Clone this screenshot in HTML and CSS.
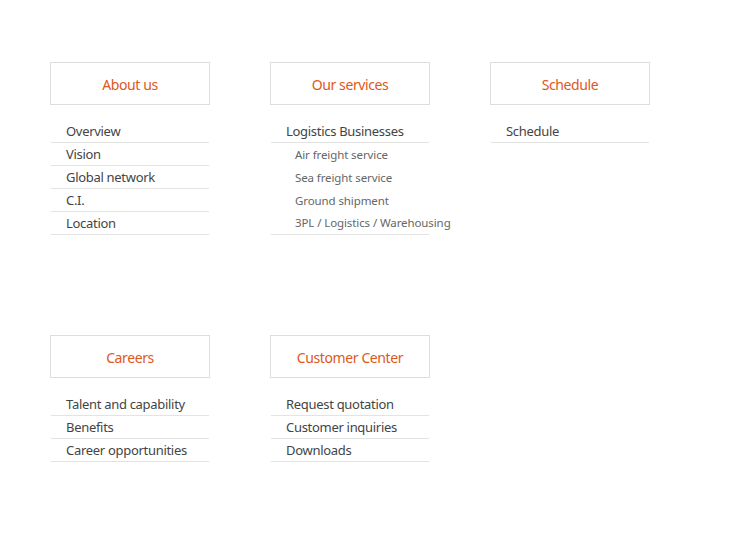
FILE: index.html
```html
<!DOCTYPE html>
<html lang="en">
<head>
<meta charset="utf-8">
<title>Sitemap</title>
<link rel="stylesheet" href="styles.css">
</head>
<body>
<div class="sitemap">
  <section class="group">
    <h2 class="group-title">About us</h2>
    <ul class="menu">
      <li class="item">Overview</li>
      <li class="item">Vision</li>
      <li class="item">Global network</li>
      <li class="item">C.I.</li>
      <li class="item">Location</li>
    </ul>
  </section>
  <section class="group">
    <h2 class="group-title">Our services</h2>
    <ul class="menu">
      <li class="item has-sub">
        <span class="item-label">Logistics Businesses</span>
        <ul class="submenu">
          <li class="subitem">Air freight service</li>
          <li class="subitem">Sea freight service</li>
          <li class="subitem">Ground shipment</li>
          <li class="subitem">3PL / Logistics / Warehousing</li>
        </ul>
      </li>
    </ul>
  </section>
  <section class="group">
    <h2 class="group-title">Schedule</h2>
    <ul class="menu">
      <li class="item">Schedule</li>
    </ul>
  </section>
  <section class="group">
    <h2 class="group-title">Careers</h2>
    <ul class="menu">
      <li class="item">Talent and capability</li>
      <li class="item">Benefits</li>
      <li class="item">Career opportunities</li>
    </ul>
  </section>
  <section class="group">
    <h2 class="group-title">Customer Center</h2>
    <ul class="menu">
      <li class="item">Request quotation</li>
      <li class="item">Customer inquiries</li>
      <li class="item">Downloads</li>
    </ul>
  </section>
</div>
</body>
</html>
```
FILE: styles.css
```css
html, body {
  margin: 0;
  padding: 0;
  background: #ffffff;
}
body {
  font-family: "Noto Sans", "Liberation Sans", sans-serif;
  color: #444;
}
.sitemap {
  display: grid;
  grid-template-columns: repeat(3, 160px);
  column-gap: 60px;
  row-gap: 100px;
  padding: 62px 0 0 50px;
}
.group {
  width: 160px;
}
.group-title {
  margin: 0;
  box-sizing: border-box;
  height: 43px;
  padding-top: 2px;
  border: 1px solid #dedede;
  display: flex;
  align-items: center;
  justify-content: center;
  font-size: 14px;
  letter-spacing: -0.4px;
  font-weight: normal;
  color: #e0571a;
}
.menu {
  list-style: none;
  margin: 15px 1px 0;
  padding: 0;
}
.item {
  height: 22px;
  line-height: 22px;
  padding-left: 15px;
  border-bottom: 1px solid #e3e3e3;
  font-size: 13px;
  letter-spacing: -0.3px;
  color: #444;
  white-space: nowrap;
}
.item.has-sub {
  height: auto;
  padding-left: 0;
}
.item-label {
  display: block;
  height: 22px;
  padding-left: 15px;
  border-bottom: 1px solid #e3e3e3;
}
.submenu {
  list-style: none;
  margin: 0;
  padding: 0;
}
.subitem {
  height: 23px;
  line-height: 23px;
  padding-left: 24px;
  font-size: 11.5px;
  letter-spacing: -0.1px;
  color: #666;
}
.subitem:last-child {
  height: 22px;
  line-height: 21px;
}
```
